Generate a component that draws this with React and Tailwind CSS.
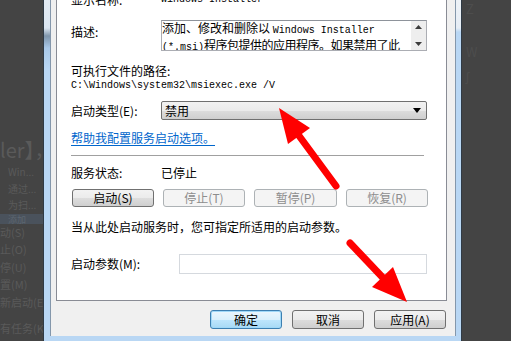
const cjk = "font-['Noto_Sans_CJK_SC','Liberation_Sans',sans-serif]";
const mono = "font-['Liberation_Mono','Noto_Sans_CJK_SC',monospace]";

const Btn = ({ children, disabled, primary, className = "" }) => {
    let look =
        "border-[#707070] bg-[linear-gradient(to_bottom,#f2f2f2_0%,#ebebeb_50%,#dddddd_51%,#cfcfcf_100%)] text-black";
    if (disabled) look = "border-[#adb2b5] bg-[#f4f4f4] text-[#8d8d8d]";
    if (primary)
        look =
            "border-[#3c7fb1] bg-[linear-gradient(to_bottom,#eaf6fd_0%,#d9f0fc_50%,#bee6fd_51%,#a7d9f5_100%)] text-black shadow-[inset_0_0_0_1px_#9fd8f8]";
    return (
        <div
            className={`flex items-center justify-center rounded-[3px] border text-[12px] leading-none ${look} ${className}`}
        >
            {children}
        </div>
    );
};

const LeftBackdrop = () => (
    <div className={`w-[43px] shrink-0 overflow-hidden whitespace-nowrap text-[#5a5a5a] ${cjk}`}>
        <div className="mt-[138px] h-[24px] text-[20px] leading-[24px]">ler】，</div>
        <div className="mt-[2px] flex flex-col text-[10px] leading-[16.5px]">
            <span className="pl-[8px]">Win...</span>
            <span className="pl-[8px]">通过...</span>
            <span className="pl-[8px]">为扫...</span>
            <span className="h-[10px] overflow-hidden bg-[#4a525c] pl-[8px] text-[9px] leading-[12px] text-[#5d6670]">添加</span>
        </div>
        <div className="flex flex-col text-[11px] leading-[17.5px]">
            <span>动(S)</span>
            <span>止(O)</span>
            <span>停(U)</span>
            <span>置(M)</span>
            <span>新启动(E)</span>
            <span className="mt-[9px]">有任务(K)</span>
        </div>
    </div>
);

const Row = ({ label, children, className = "" }) => (
    <div className={`flex items-center ${className}`}>
        <div className="w-[90px] shrink-0">{label}</div>
        {children}
    </div>
);

export default function App() {
    return (
        <div className="relative flex h-[341px] w-[511px] overflow-hidden bg-[#444444]">
            <LeftBackdrop />

            {/* window frame */}
            <div className="flex h-[341px] w-[419px] shrink-0 flex-col border-x border-[#2f3a45] bg-[#b9d7f4]">
                <div className="flex flex-1">
                    <div className="w-[6px] shrink-0 bg-[linear-gradient(to_bottom,#e3ebf3_0px,#dbe6f1_28px,#7f95ab_36px,#a9c8e8_48px,#b9d7f4_70px,#b9d7f4_100%)]" />
                    <div className={`flex h-[336px] flex-1 flex-col overflow-hidden border-x border-[#8497ab] bg-[#f0f0f0] pl-[5px] pr-[8px] text-black ${cjk}`}>
                        {/* tab page */}
                        <div className="-mt-[10px] flex flex-col border border-[#898c95] bg-white pb-[26px] pl-[14px] text-[12px] leading-[16px]">
                            <Row label="显示名称:" className="h-[18px]">
                                <span className={`${mono} text-[10px]`}>Windows Installer</span>
                            </Row>

                            <div className="mt-[11px] flex items-start">
                                <div className="mt-[4px] w-[90px] shrink-0">描述:</div>
                                <div className="flex h-[31px] w-[266px] shrink-0 border border-[#abadb3] border-t-[#8e939b]">
                                    <div className="w-[249px] shrink-0 overflow-hidden whitespace-nowrap text-[12px] leading-[14px]">
                                        <div>
                                            添加、修改和删除以 <span className={`${mono} text-[10px]`}>Windows Installer</span>
                                        </div>
                                        <div className="tracking-[-0.5px]">
                                            <span className={`${mono} text-[10px] tracking-normal`}>(*.msi)</span>程序包提供的应用程序。如果禁用了此
                                        </div>
                                    </div>
                                    <div className="flex w-[15px] shrink-0 flex-col items-center justify-between bg-[#eeeeee] py-[4px]">
                                        <svg width="7" height="4" viewBox="0 0 7 4">
                                            <polygon points="3.5,0 7,4 0,4" fill="#3c3c3c" />
                                        </svg>
                                        <svg width="7" height="4" viewBox="0 0 7 4">
                                            <polygon points="0,0 7,0 3.5,4" fill="#3c3c3c" />
                                        </svg>
                                    </div>
                                </div>
                            </div>

                            <div className="mt-[12px] h-[16px]">可执行文件的路径:</div>
                            <div className={`${mono} h-[14px] text-[10px] leading-[14px]`}>C:\Windows\system32\msiexec.exe /V</div>

                            <Row label="启动类型(E):" className="mt-[8px] h-[19px]">
                                <div className="flex h-[19px] w-[266px] items-center justify-between rounded-[2px] border border-[#707070] bg-[linear-gradient(to_bottom,#f2f2f2_0%,#ebebeb_50%,#dddddd_51%,#cfcfcf_100%)] pl-[3px] pr-[5px]">
                                    <span>禁用</span>
                                    <svg width="8" height="5" viewBox="0 0 8 5">
                                        <polygon points="0,0 8,0 4,5" fill="#000" />
                                    </svg>
                                </div>
                            </Row>

                            <div className="mt-[10px] h-[16px] text-[#0066cc] underline underline-offset-2">帮助我配置服务启动选项。</div>

                            <div className="mt-[9px] mr-[22px] h-px bg-[#a0a0a0]" />

                            <Row label="服务状态:" className="mt-[9px] h-[16px]">
                                <span>已停止</span>
                            </Row>

                            <div className="mt-[8px] flex gap-[9px] pl-px">
                                <Btn className="h-[18px] w-[82px]">启动(S)</Btn>
                                <Btn disabled className="h-[18px] w-[82px]">停止(T)</Btn>
                                <Btn disabled className="h-[18px] w-[83px]">暂停(P)</Btn>
                                <Btn disabled className="h-[18px] w-[82px]">恢复(R)</Btn>
                            </div>

                            <div className="mt-[12px] h-[16px]">当从此处启动服务时，您可指定所适用的启动参数。</div>

                            <div className="mt-[19px] flex h-[20px] items-center">
                                <div className="w-[108px] shrink-0">启动参数(M):</div>
                                <div className="h-[20px] w-[248px] border border-[#d5d9de] bg-white" />
                            </div>
                        </div>

                        {/* dialog buttons */}
                        <div className="mt-[9px] flex justify-end gap-[10px] pr-px">
                            <Btn primary className="h-[19px] w-[72px]">确定</Btn>
                            <Btn className="h-[19px] w-[72px]">取消</Btn>
                            <Btn className="h-[19px] w-[72px]">应用(A)</Btn>
                        </div>
                    </div>
                    <div className="w-[5px] shrink-0 bg-[linear-gradient(to_bottom,#edf2f7_0px,#e6edf5_28px,#b9d7f4_32px,#b9d7f4_100%)]" />
                </div>
            </div>

            <div className={`flex-1 overflow-hidden pl-[4px] text-[#4d4d4d] ${cjk}`}>
                <div className="mt-[2px] text-[13px] leading-[14px]">Z</div>
                <div className="mt-[26px] text-[13px]">W</div>
                <div className="mt-[4px] text-[13px]">ʃ</div>
            </div>

            {/* red annotation arrows */}
            <svg className="pointer-events-none absolute inset-0" width="511" height="341" viewBox="0 0 511 341">
                <line x1="336" y1="186" x2="297" y2="133" stroke="#ff0000" strokeWidth="7" strokeLinecap="round" />
                <polygon points="279,108 310,128 288,144" fill="#ff0000" />
                <line x1="350" y1="243" x2="386" y2="281" stroke="#ff0000" strokeWidth="7" strokeLinecap="round" />
                <polygon points="407,302 393,267 372,287" fill="#ff0000" />
            </svg>
        </div>
    );
}
